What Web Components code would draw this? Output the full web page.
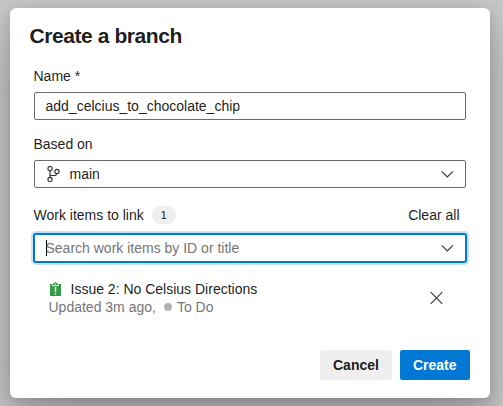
<!DOCTYPE html>
<html lang="en">
<head>
<meta charset="utf-8">
<title>Create a branch</title>
<style>
html, body { height: 100%; }
body { margin: 0; background: #c8c8c8; overflow: hidden; font: 14px/20px "Liberation Sans", Arial, sans-serif; color: rgba(0,0,0,.9); }
</style>
</head>
<body>
<branch-dialog heading="Create a branch">
  <form-field label="Name *"><text-box>add_celcius_to_chocolate_chip</text-box></form-field>
  <form-field label="Based on"><text-box dropdown><branch-icon></branch-icon>main</text-box></form-field>
  <form-field label="Work items to link" count="1" action="Clear all"><text-box dropdown focused placeholder="Search work items by ID or title"></text-box></form-field>
  <work-item heading="Issue 2: No Celsius Directions" updated="Updated 3m ago," state="To Do"></work-item>
  <action-button slot="footer">Cancel</action-button>
  <action-button slot="footer" primary>Create</action-button>
</branch-dialog>
<script>
class Base extends HTMLElement {
  connectedCallback() {
    if (this.shadowRoot) return;
    this.attachShadow({ mode: "open" }).innerHTML = this.render();
  }
  val(name) { return this.getAttribute(name) || ""; }
}

customElements.define("branch-dialog", class extends Base {
  render() { return `<style>
    :host { display: flex; flex-direction: column; box-sizing: border-box; width: 480px; height: 390px; margin: 8px 0 0 9.5px; padding: 14px 20px 18px; background: #fff; border-radius: 6px;
      box-shadow: 0 25.6px 57.6px rgba(0,0,0,.22), 0 4.8px 14.4px rgba(0,0,0,.18); }
    h1 { margin: 0; font-size: 21px; line-height: 28px; font-weight: 700; letter-spacing: -.42px; }
    main { flex: 1; display: flex; flex-direction: column; padding: 16px 4px 0; }
    footer { display: flex; justify-content: flex-end; gap: 8px; }
    </style><h1>${this.val("heading")}</h1><main><slot></slot></main><footer><slot name="footer"></slot></footer>`; }
});

customElements.define("form-field", class extends Base {
  render() { return `<style>
    :host { display: block; }
    :host(:not([count])) { margin-bottom: 14px; }
    header { display: flex; align-items: center; height: 20px; padding-right: 6px; margin-bottom: 6px; }
    :host([count]) header { height: 26px; margin-bottom: 6px; }
    .pill { margin-left: 8px; width: 24px; height: 18px; border-radius: 9px; background: #efefef; font-size: 11.5px; line-height: 18px; text-align: center; }
    .action { margin-left: auto; }
    </style><header><span>${this.val("label")}</span>${this.hasAttribute("count") ? `<span class="pill">${this.val("count")}</span>` : ""}<span class="action">${this.val("action")}</span></header><slot></slot>`; }
});

customElements.define("text-box", class extends Base {
  render() { return `<style>
    :host { display: flex; align-items: center; box-sizing: border-box; height: 28px; padding: 0 11px; border: 1px solid #6b6b6b; border-radius: 2px; background: #fff; }
    :host([focused]) { border-color: #0078d4; box-shadow: 0 0 0 1px #0078d4, 0 0 0 3px #c7e0f4; }
    .caret { width: 1px; height: 16px; margin-right: -1px; background: #000; }
    .hint { color: #757575; }
    svg { margin-left: auto; }
    </style>${this.hasAttribute("focused") ? `<span class="caret"></span>` : ""}<slot></slot><span class="hint">${this.val("placeholder")}</span>${this.hasAttribute("dropdown") ? `<svg width="14" height="14" viewBox="0 0 14 14" fill="none" stroke="#333" stroke-width="1.1"><path d="M1.7 4.4 7.3 10l5.6-5.6"/></svg>` : ""}`; }
});

customElements.define("branch-icon", class extends Base {
  render() { return `<style>:host { display: block; width: 16px; height: 16px; margin-right: 8px; } svg { display: block; }</style>
    <svg width="16" height="16" viewBox="0 0 16 16" fill="none" stroke="#333" stroke-width="1.15"><circle cx="4" cy="2.6" r="2.1"/><circle cx="4" cy="13.4" r="2.1"/><circle cx="11" cy="5.5" r="2.1"/><path d="M4 4.7v6.6M4 9.5h5.2q1 0 1.4-1.9"/></svg>`; }
});

customElements.define("work-item", class extends Base {
  render() { return `<style>
    :host { display: flex; align-items: center; justify-content: space-between; margin-top: 18px; padding: 0 22px 0 15px; line-height: 18px; }
    .row { display: flex; align-items: center; height: 18px; }
    .type { margin: 0 8px 0 0; }
    .meta { color: #757575; }
    .dot { width: 8px; height: 8px; border-radius: 50%; background: #b2b2b2; margin: 0 5px 0 8px; }
    svg { display: block; }
    </style>
    <div><div class="row"><svg class="type" width="14" height="14" viewBox="0 0 14 14"><path fill="#339947" d="M1 2h3V1.2h1.4Q5.7 0 6.5 0t1.1 1.2H9V2h3v12H1z"/><path fill="none" stroke="#fff" stroke-width=".9" d="M3.5 2.4v1.3h6V2.4"/><path fill="#fff" d="M5.8 1.5h1.4v.9H5.8zM5.8 5h1.4v5H5.8zM5.8 11h1.4v1.5H5.8z"/></svg><span>${this.val("heading")}</span></div>
    <div class="row meta"><span>${this.val("updated")}</span><i class="dot"></i><span>${this.val("state")}</span></div></div>
    <svg width="14" height="14" viewBox="0 0 14 14" fill="none" stroke="#333" stroke-width="1.05"><path d="m.7 1.2 11.6 11.6M12.3 1.2.7 12.8"/></svg>`; }
});

customElements.define("action-button", class extends Base {
  render() { return `<style>
    :host { box-sizing: border-box; height: 30px; padding: 5px 13px; border-radius: 2px; background: #efefef; font-weight: 700; line-height: 20px; }
    :host([primary]) { background: #0078d4; color: #fff; }
    </style><slot></slot>`; }
});
</script>
</body>
</html>
